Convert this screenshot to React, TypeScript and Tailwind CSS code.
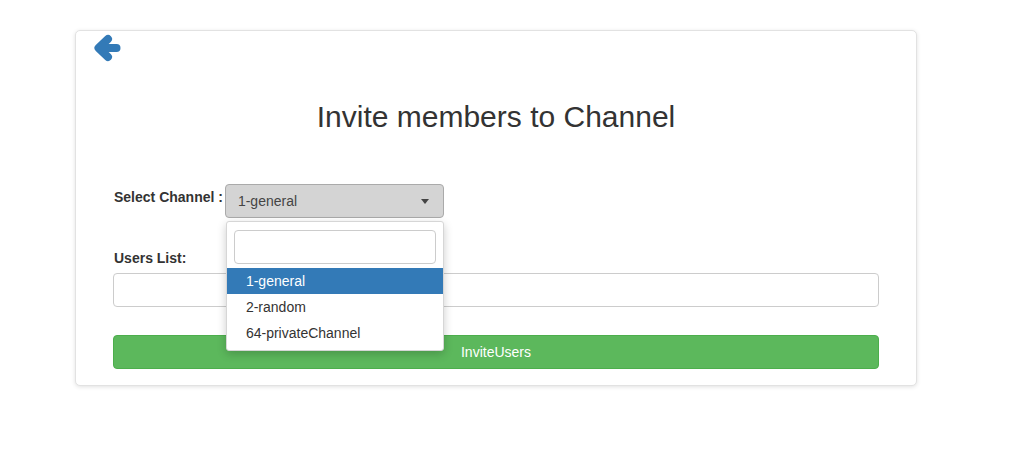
const channels = ['1-general', '2-random', '64-privateChannel'];

function BackArrow() {
  return (
    <svg viewBox="0 0 30 30" className="h-[30px] w-[30px]" fill="none">
      <path
        d="M24.5 15H7M16 6L6.5 15L16 24"
        stroke="#337ab7"
        strokeWidth="8"
        strokeLinecap="round"
        strokeLinejoin="round"
      />
    </svg>
  );
}

export default function App() {
  return (
    <div className="min-h-[470px] bg-white pt-[30px] pl-[75px] text-[#333] font-['Liberation_Sans',Arial,sans-serif]">
      <div className="w-[842px] rounded-[5px] border border-[#e2e2e2] bg-white pb-[16px] shadow-[0_1px_4px_rgba(0,0,0,0.12)]">
        <div className="h-[32px] pt-[2px] pl-[16px]">
          <BackArrow />
        </div>

        <h2 className="mt-[37px] text-center text-[30px] leading-[33px] font-normal">
          Invite members to Channel
        </h2>

        <div className="mt-[51px] flex px-[37px]">
          <label className="mt-[3px] ml-[1px] mr-[2px] text-[14px] leading-[20px] font-bold">
            Select Channel :
          </label>
          <div className="relative">
            <div className="flex h-[34px] w-[219px] items-center justify-between rounded-[4px] border border-[#aaa] bg-[#d4d4d4] pl-[12px] pr-[14px] text-[14px] leading-[20px] text-[#444]">
              <span>1-general</span>
              <span className="h-0 w-0 border-x-[4px] border-t-[5px] border-x-transparent border-t-[#444]" />
            </div>

            <div className="absolute top-[37px] left-[1px] z-10 w-[218px] rounded-[3px] border border-[#d6d6d6] bg-white pt-[8px] pb-[4px] shadow-[0_3px_10px_rgba(0,0,0,0.2)]">
              <div className="px-[7px]">
                <div className="h-[34px] w-[202px] rounded-[4px] border border-[#ccc] bg-white" />
              </div>
              <ul className="mt-[4px] text-[14px] leading-[20px]">
                {channels.map((c, i) => (
                  <li
                    key={c}
                    className={`flex h-[26px] items-center pl-[19px] ${
                      i === 0 ? 'bg-[#337ab7] text-white' : 'text-[#333]'
                    }`}
                  >
                    {c}
                  </li>
                ))}
              </ul>
            </div>
          </div>
        </div>

        <div className="px-[37px]">
          <label className="mt-[30px] ml-[1px] block text-[14px] leading-[20px] font-bold">
            Users List:
          </label>
          <div className="mt-[5px] h-[34px] w-full rounded-[4px] border border-[#ccc] bg-white" />
          <button className="mt-[28px] flex h-[34px] w-full items-center justify-center rounded-[4px] border border-[#4cae4c] bg-[#5cb85c] text-[14px] text-white">
            InviteUsers
          </button>
        </div>
      </div>
    </div>
  );
}
